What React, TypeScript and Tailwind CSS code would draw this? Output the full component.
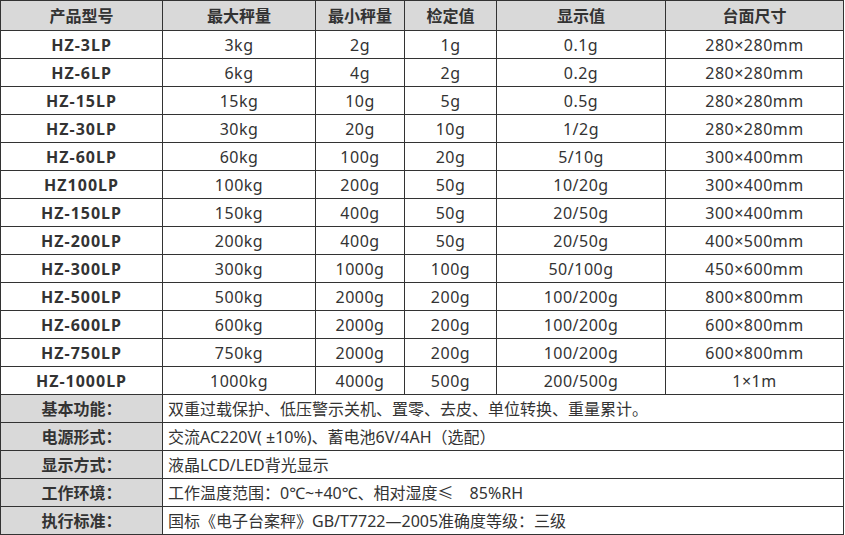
import React from "react"

const rows: string[][] = [
  ["HZ-3LP", "3kg", "2g", "1g", "0.1g", "280×280mm"],
  ["HZ-6LP", "6kg", "4g", "2g", "0.2g", "280×280mm"],
  ["HZ-15LP", "15kg", "10g", "5g", "0.5g", "280×280mm"],
  ["HZ-30LP", "30kg", "20g", "10g", "1/2g", "280×280mm"],
  ["HZ-60LP", "60kg", "100g", "20g", "5/10g", "300×400mm"],
  ["HZ100LP", "100kg", "200g", "50g", "10/20g", "300×400mm"],
  ["HZ-150LP", "150kg", "400g", "50g", "20/50g", "300×400mm"],
  ["HZ-200LP", "200kg", "400g", "50g", "20/50g", "400×500mm"],
  ["HZ-300LP", "300kg", "1000g", "100g", "50/100g", "450×600mm"],
  ["HZ-500LP", "500kg", "2000g", "200g", "100/200g", "800×800mm"],
  ["HZ-600LP", "600kg", "2000g", "200g", "100/200g", "600×800mm"],
  ["HZ-750LP", "750kg", "2000g", "200g", "100/200g", "600×800mm"],
  ["HZ-1000LP", "1000kg", "4000g", "500g", "200/500g", "1×1m"],
]

const info: [string, string][] = [
  ["基本功能：", "双重过载保护、低压警示关机、置零、去皮、单位转换、重量累计。"],
  ["电源形式：", "交流AC220V( ±10%)、蓄电池6V/4AH（选配）"],
  ["显示方式：", "液晶LCD/LED背光显示"],
  ["工作环境：", "工作温度范围：0℃~+40℃、相对湿度≤　85%RH"],
  ["执行标准：", "国标《电子台案秤》GB/T7722—2005准确度等级：三级"],
]

const headers = ["产品型号", "最大秤量", "最小秤量", "检定值", "显示值", "台面尺寸"]

export default function App() {
  return (
    <div className="bg-white w-[845px] h-[535px]">
      <table
        className="table-fixed border-collapse w-[843px] text-[16px] text-[#333]"
        style={{ fontFamily: '"Noto Sans", "Noto Sans CJK SC", sans-serif' }}
      >
        <colgroup>
          <col className="w-[162px]" />
          <col className="w-[153px]" />
          <col className="w-[89px]" />
          <col className="w-[92px]" />
          <col className="w-[169px]" />
          <col className="w-[178px]" />
        </colgroup>
        <thead>
          <tr className="h-[30px] bg-[#d9d9d9]">
            {headers.map((h) => (
              <th key={h} className="border border-[#333] p-0 font-bold text-center leading-none">
                {h}
              </th>
            ))}
          </tr>
        </thead>
        <tbody>
          {rows.map((r) => (
            <tr key={r[0]} className="h-[28px]">
              {r.map((c, i) => (
                <td
                  key={i}
                  className={
                    i === 0
                      ? "border border-[#333] p-0 text-center leading-none font-bold tracking-[1px]"
                      : "border border-[#333] p-0 text-center leading-none tracking-[0.5px]"
                  }
                >
                  {c}
                </td>
              ))}
            </tr>
          ))}
          {info.map(([label, text]) => (
            <tr key={label} className="h-[28px]">
              <td className="border border-[#333] p-0 bg-[#d9d9d9] font-bold text-center leading-none">
                {label}
              </td>
              <td colSpan={5} className="border border-[#333] py-0 pl-[5px] text-left leading-none">
                {text}
              </td>
            </tr>
          ))}
        </tbody>
      </table>
    </div>
  )
}
